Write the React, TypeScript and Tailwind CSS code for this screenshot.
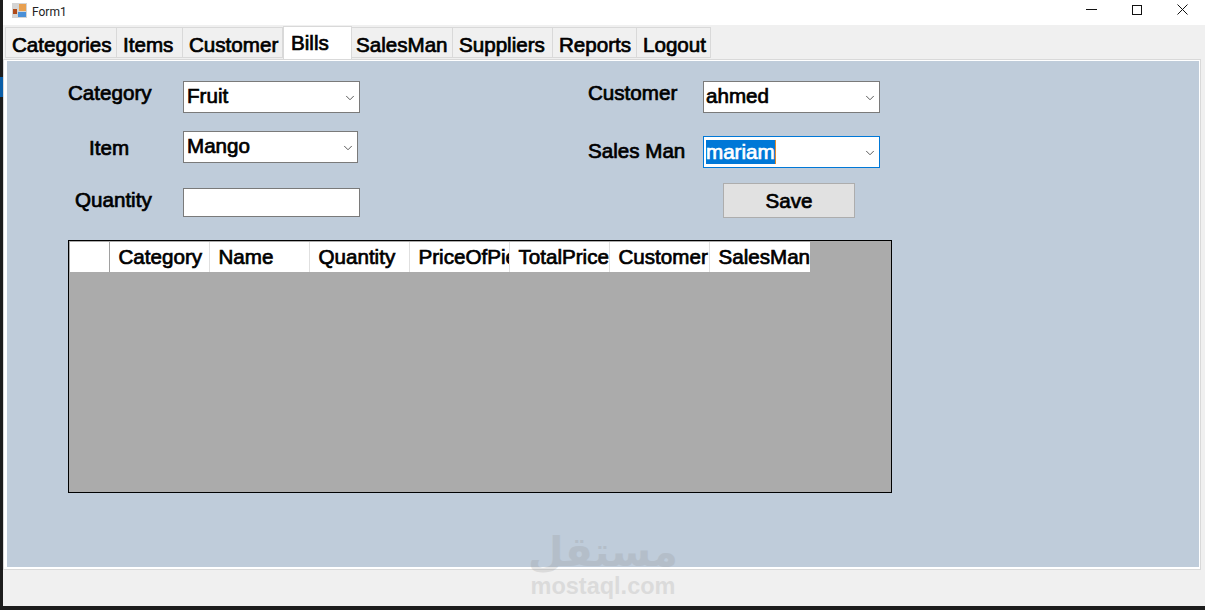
import React from 'react';
import { ChevronDown } from 'lucide-react';

const tabs = [
  { name: 'Categories', w: 'w-[112px] pl-[6px]' },
  { name: 'Items', w: 'w-[66px] pl-[6px]' },
  { name: 'Customer', w: 'w-[100px] pl-[6px]' },
  { name: 'Bills', w: 'w-[69px]', active: true },
  { name: 'SalesMan', w: 'w-[101px] pl-[4px]' },
  { name: 'Suppliers', w: 'w-[100px] pl-[6px]' },
  { name: 'Reports', w: 'w-[84px] pl-[6px]' },
  { name: 'Logout', w: 'w-[74px] pl-[6px]' },
];

const columns = ['Category', 'Name', 'Quantity', 'PriceOfPiece', 'TotalPrice', 'Customer', 'SalesMan'];

function Combo({ value, className = '', focused = false }: { value: string; className?: string; focused?: boolean }) {
  return (
    <div className={`h-[32px] bg-white border flex items-center pr-[2px] justify-between ${focused ? 'border-[#0078d7]' : 'border-[#7a7a7a]'} ${className}`}>
      {focused ? (
        <span className="bg-[#0078d7] text-white h-[24px] leading-[23px] border-r border-[#e08a2c]">{value}</span>
      ) : (
        <span className="leading-[24px] mb-[2px]">{value}</span>
      )}
      <ChevronDown className="w-[14px] h-[14px] text-[#444] mt-[2px]" strokeWidth={1.5} />
    </div>
  );
}

function FormIcon() {
  return (
    <svg width="15" height="15" viewBox="0 0 15 15">
      <rect x="0" y="0" width="15" height="15" fill="#d4d4d4" />
      <rect x="7" y="1" width="7" height="7" fill="#e8a050" />
      <rect x="1" y="6" width="4" height="5" fill="#b04a18" />
      <rect x="6" y="9" width="8" height="5" fill="#4a90d8" />
    </svg>
  );
}

export default function App() {
  return (
    <div className="w-[1205px] h-[610px] overflow-hidden flex flex-col bg-[#1c1c1c] font-['Liberation_Sans',Arial,sans-serif] text-[20.6px] [-webkit-text-stroke-width:0.7px] text-black relative">
      {/* Bit of the window behind, showing at the left edge */}
      <div className="absolute left-0 top-[77px] w-[3px] h-[20px] bg-[#0a5ea8]" />
      <div className="flex-1 min-h-0 ml-[3px] flex flex-col bg-[#f0f0f0]">
        {/* Title bar */}
        <div className="h-[25px] bg-white flex items-center shrink-0">
          <div className="ml-[9px] mt-[-4px]"><FormIcon /></div>
          <span className="ml-[5px] mt-[-2px] text-[12px] [-webkit-text-stroke-width:0] text-[#222] font-['Roboto',sans-serif]">Form1</span>
          <div className="ml-auto flex items-center mr-[17px] gap-[35px] mt-[-6px]">
            <svg width="11" height="2" viewBox="0 0 11 2"><rect width="11" height="1" fill="#111" /></svg>
            <svg width="10" height="10" viewBox="0 0 10 10"><rect x="0.5" y="0.5" width="9" height="9" fill="none" stroke="#111" /></svg>
            <svg width="11" height="11" viewBox="0 0 11 11"><path d="M0.5 0.5 L10.5 10.5 M10.5 0.5 L0.5 10.5" stroke="#111" fill="none" /></svg>
          </div>
        </div>

        {/* Tabs */}
        <div className="flex items-end h-[34px] pl-[2px] shrink-0 relative z-10">
          {tabs.map((t) =>
            t.active ? (
              <div key={t.name} className={`${t.w} h-[33px] bg-white border border-b-0 border-[#d9d9d9] pl-[7px] pt-[3px] leading-[26px]`}>
                {t.name}
              </div>
            ) : (
              <div key={t.name} className={`${t.w} h-[31px] mb-[1px] border border-l-0 first:border-l border-[#d9d9d9] pt-[4px] leading-[26px] whitespace-nowrap`}>
                {t.name}
              </div>
            )
          )}
        </div>

        {/* Tab page */}
        <div className="w-[1198px] h-[511px] shrink-0 bg-white border border-[#d9d9d9] pl-[3px] pr-[1px] pt-[1px] pb-[2px]">
          <div className="relative h-full bg-[#bfccda] pl-[61px] pt-[20px]">
            <div className="flex">
              {/* Left fields */}
              <div className="w-[520px]">
                <div className="flex h-[32px]">
                  <div className="w-[115px] leading-[24px]">Category</div>
                  <Combo value="Fruit" className="w-[177px] pl-[3px]" />
                </div>
                <div className="flex h-[32px] mt-[18px]">
                  <div className="w-[115px] pl-[21px] leading-[34px]">Item</div>
                  <Combo value="Mango" className="w-[175px] pl-[3px]" />
                </div>
                <div className="flex h-[29px] mt-[25px]">
                  <div className="w-[115px] pl-[7px] leading-[24px]">Quantity</div>
                  <div className="w-[177px] h-[29px] bg-white border border-[#7a7a7a]" />
                </div>
              </div>
              {/* Right fields */}
              <div>
                <div className="flex h-[32px]">
                  <div className="w-[115px] leading-[24px]">Customer</div>
                  <Combo value="ahmed" className="w-[177px] pl-[2px]" />
                </div>
                <div className="flex h-[32px] mt-[23px]">
                  <div className="w-[115px] leading-[30px]">Sales Man</div>
                  <Combo value="mariam" className="w-[177px] pl-[2px]" focused />
                </div>
                <button className="block ml-[135px] mt-[15px] w-[132px] h-[35px] bg-[#e1e1e1] border border-[#adadad] text-center leading-[28px]">
                  Save
                </button>
              </div>
            </div>

            {/* Data grid */}
            <div className="mt-[22px] w-[824px] h-[253px] bg-[#ababab] border border-black p-px">
              <div className="flex h-[30px] bg-white w-fit">
                <div className="w-[40px] border-r border-[#a0a0a0]" />
                {columns.map((c) => (
                  <div key={c} className="w-[100px] pl-[8.5px] border-r border-[#e0e0e0] last:border-r-0 overflow-hidden whitespace-nowrap leading-[29px]">
                    {c}
                  </div>
                ))}
              </div>
            </div>
          </div>
        </div>
      </div>
      <div className="h-[4px] shrink-0" />

      {/* Watermark */}
      <div className="absolute left-[528px] top-[530px] w-[150px] flex flex-col items-center text-[#8a8a8a] opacity-20 font-bold [-webkit-text-stroke-width:0] pointer-events-none">
        <span className="h-[42px] leading-[44px] text-[41px] font-['DejaVu_Sans',sans-serif]">مستقل</span>
        <span className="text-[23.5px] leading-[26px] mt-[1px]">mostaql.com</span>
      </div>
    </div>
  );
}
